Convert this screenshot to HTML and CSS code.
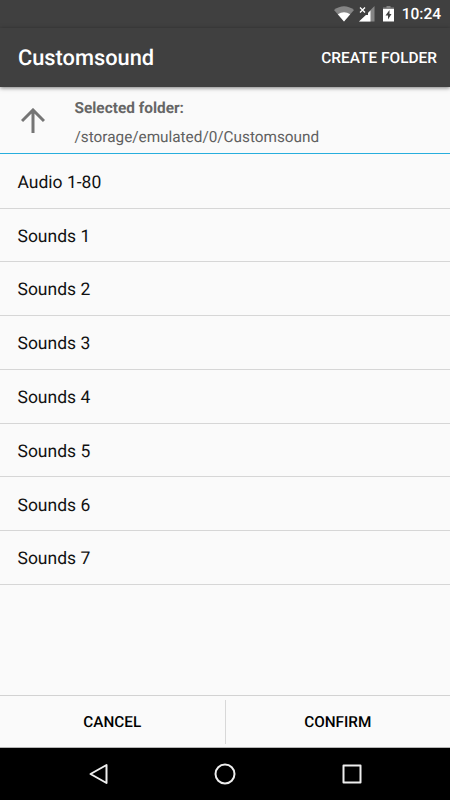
FILE: index.html
```html
<!DOCTYPE html>
<html lang="en">
<head>
<meta charset="utf-8">
<title>Customsound</title>
<link rel="stylesheet" href="styles.css">
</head>
<body>
<div class="status">
  <svg class="wifi" viewBox="0 0 20 16"><path d="M0 4Q10-3.500 20 4L10 15.500Z" fill="#858585"/><path d="M3.800 8.300Q10 4 16.200 8.300L10 15.500Z" fill="#fff"/></svg>
  <svg class="cell" viewBox="0 0 16 16"><path d="M15.500 0V15.500H0L7 9H9V6.500Z" fill="#858585"/><path d="M11.500 4.500V15.500H0L7 9H9V7Z" fill="#fff"/><path d="M1 1.500L6 6.500M6 1.500L1 6.500" stroke="#fff" stroke-width="1.300"/></svg>
  <svg class="battery" viewBox="0 0 11 16"><path d="M3.500 0H7.500V1.500H11V3H0V1.500H3.500Z" fill="#858585"/><path d="M0 3H11V15.500H0Z" fill="#fff"/><path d="M6.500 4L2.500 9.500H5V13.500L8.500 8H6.500Z" fill="#404040"/></svg>
  <span>10:24</span>
</div>
<header class="bar"><h1>Customsound</h1><span class="create">CREATE FOLDER</span></header>
<section class="folder">
  <svg class="up" viewBox="0 0 24 26"><path d="M12 25V2M1 13L12 2L23 13" fill="none" stroke="#757575" stroke-width="3"/></svg>
  <div><div class="label">Selected folder:</div><div class="path">/storage/emulated/0/Customsound</div></div>
</section>
<ul class="list">
  <li>Audio 1-80</li><li>Sounds 1</li><li>Sounds 2</li><li>Sounds 3</li><li>Sounds 4</li><li>Sounds 5</li><li>Sounds 6</li><li>Sounds 7</li>
</ul>
<footer class="actions"><span>CANCEL</span><i></i><span>CONFIRM</span></footer>
<nav class="nav">
  <svg viewBox="0 0 22 22"><path d="M18.500 2V20L2.500 11Z"/></svg>
  <svg viewBox="0 0 22 22"><circle cx="11" cy="11" r="9.500"/></svg>
  <svg viewBox="0 0 22 22"><path d="M2.500 2.500H19.500V19.500H2.500Z"/></svg>
</nav>
</body>
</html>
```

FILE: styles.css
```css
* { box-sizing: border-box; }
body { margin: 0; width: 450px; height: 800px; display: flex; flex-direction: column; background: #fafafa; font-family: Roboto, sans-serif; color: #111; overflow: hidden; text-rendering: geometricPrecision; }
.status { height: 28px; flex: none; background: #404040; color: #fff; display: flex; align-items: center; justify-content: flex-end; padding-right: 9px; font-size: 15.500px; font-weight: 500; }
.status svg { height: 16px; }
.wifi { width: 20px; margin-right: 5px; }
.cell { width: 16px; margin-right: 8px; }
.battery { width: 11px; margin-right: 8px; }
.bar { height: 59px; flex: none; background: #404040; color: #fff; display: flex; align-items: center; justify-content: space-between; padding: 0 13px 0 18px; box-shadow: 0 1px 4px rgba(0,0,0,.5); z-index: 1; }
h1 { margin: 0; padding-top: 2px; font-size: 21.800px; font-weight: 500; }
.create { font-size: 15.450px; font-weight: 500; }
.folder { height: 67px; flex: none; display: flex; padding: 12px 0 0 21px; border-bottom: 1px solid #27aedd; color: #666; }
.up { width: 24px; height: 26px; margin: 9px 29.500px 0 0; }
.label { font-size: 15.400px; font-weight: 700; line-height: 18px; }
.path { font-size: 15.320px; line-height: 18px; margin-top: 11px; color: #606060; }
.list { flex: 1; margin: 0; padding: 0; list-style: none; }
.list li { height: 53.800px; border-bottom: 1px solid #d6d6d6; padding: 3.500px 17.500px 0; display: flex; align-items: center; font-size: 17.500px; }
.list li:first-child { height: 54.500px; padding-top: 4.500px; }
.actions { height: 53px; flex: none; border-top: 1px solid #d2d2d2; border-bottom: 1px solid #b5b5b5; display: flex; align-items: center; font-size: 15.300px; font-weight: 500; color: #000; }
.actions span { flex: 1; text-align: center; }
.actions i { width: 1px; height: 44px; background: #d8d8d8; }
.nav { height: 52px; flex: none; background: #000; display: flex; align-items: center; justify-content: center; gap: 104.500px; }
.nav svg { width: 22px; height: 22px; fill: none; stroke: #eee; stroke-width: 2; stroke-linejoin: round; }
```
